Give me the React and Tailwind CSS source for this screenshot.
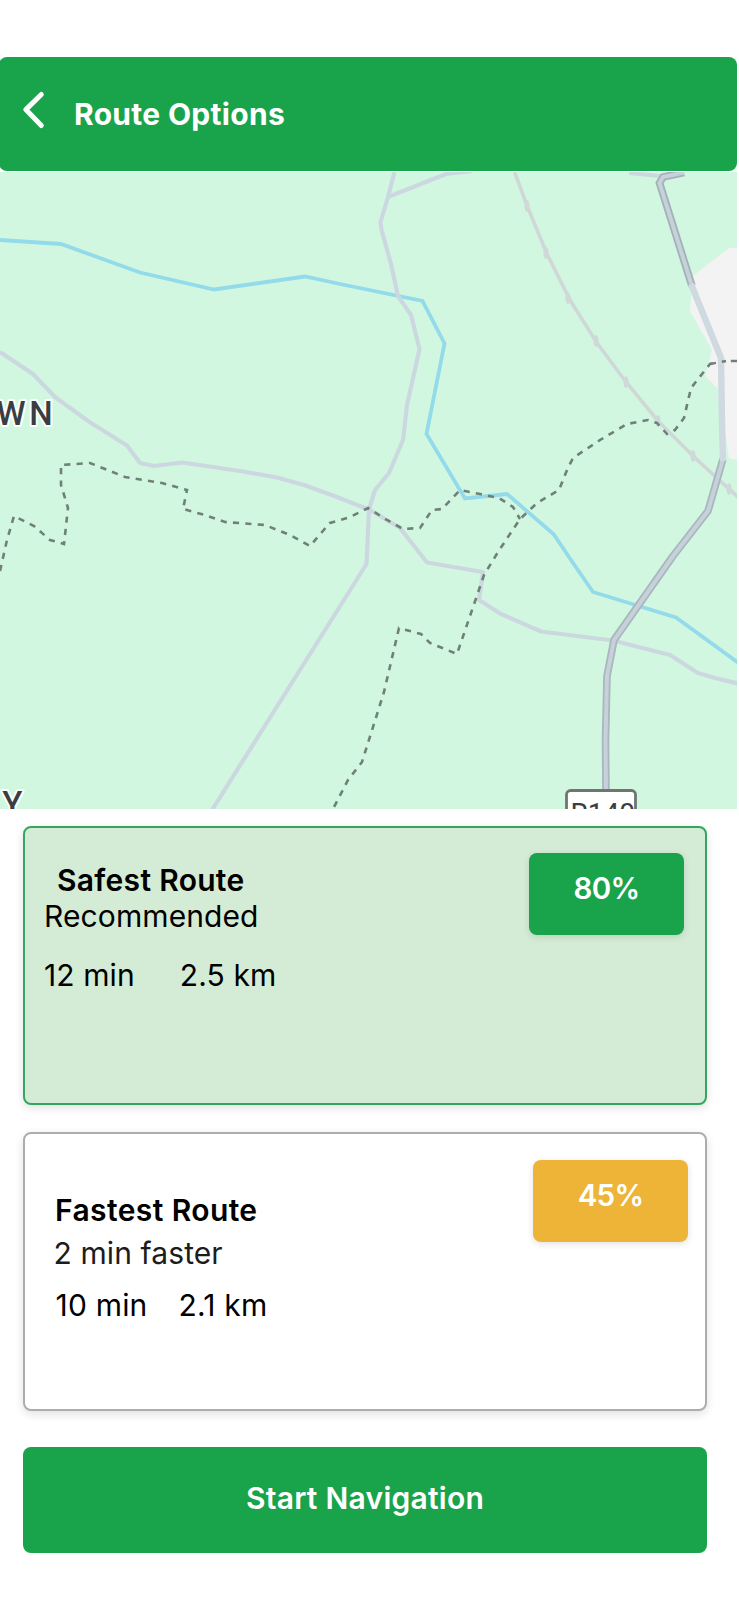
import React from "react";

const boundaries = [
  "M0 571 L7 540 L14 516 L34 526 L50 540 L64 544 L68 508 L61 485 L61 465 L90 463 L125 477 L162 483 L187 490 L183 509 L205 515 L225 522 L265 525 L290 535 L310 546 L322 532 L330 523 L350 517 L368 508 L387 520 L403 529 L420 528 L432 510 L442 509 L460 490 L480 494 L499 498 L513 507 L520 519",
  "M737 361 L726 361 L710 364 L691 388 L684 418 L675 430 L667 434 L657 423 L648 420 L627 424 L600 440 L573 458 L567 470 L559 490 L537 503 L520 519 L498 552 L484 575 L457 654 L430 643 L421 634 L399 628 L384 692 L362 762 L348 780 L333 809",
];

const roads = [
  "M394.5 172 L388 197 L380.5 222 L381.5 230 L391 264 L398 296 L411 315 L419.5 349 L407 405 L403 440 L389 473 L375 490 L369 509 L366.5 564 L212 810",
  "M388 197 L446 174 L472 171",
  "M0 352 L33 374 L55 397 L88 421 L127 445.5 L140 463 L154 466 L182 462.5 L240 471 L277 477.5 L304 485 L337 497 L370 510 L400 528 L427 562.5 L483 572 L479 600 L501 614 L541 631.5 L613 640.5 L670 655 L698 673 L715 678 L740 684",
  "M629 173 L660 176",
];

const railTicks = [
  [527, 206],
  [546, 253],
  [568, 298],
  [596, 341],
  [626, 382],
  [658, 421],
  [693, 456],
  [729, 489],
];

function RouteMap() {
  return (
    <svg className="block h-[637px] w-[737px]" viewBox="0 172 737 637" fill="none">
      <rect x="0" y="172" width="737" height="637" fill="#d2f7e1" />
      <path d="M737 248 L729 248 L693 276 L690 311 L712 350 L705 376 L718 389 L729 458 L737 460 Z" fill="#f3f3f4" />
      <path
        d="M0 240 L61 244 L140 272.5 L214 289.5 L305 276.5 L340 284 L422.5 301 L444.5 343.5 L426.5 434 L465 498.5 L507 494 L553.5 534 L571 560 L593 592 L676 617.5 L740 664"
        stroke="#93dbea"
        strokeWidth="3.8"
      />
      {roads.map((d) => (
        <path key={d} d={d} stroke="#ccd8df" strokeWidth="4.2" strokeLinejoin="round" />
      ))}
      <path
        d="M514.5 172 L528 208 L547 254 L570 300 L597 343 L626 382 L658 421 L694 457 L740 499"
        stroke="#cfd7d7"
        strokeWidth="3.6"
      />
      {railTicks.map(([x, y]) => (
        <ellipse key={x} cx={x} cy={y} rx="2.6" ry="6" fill="#cfdad8" />
      ))}
      {boundaries.map((d) => (
        <path key={d} d={d} stroke="#6f8077" strokeWidth="2.6" strokeDasharray="6.2 6.2" />
      ))}
      <path d="M684 172.5 L663 177 L659.5 183 L692 286" stroke="#a3b1b8" strokeWidth="7.6" />
      <path d="M723 459 L708 511 L673 556 L614 640 L607 676 L605.5 740 L606 792" stroke="#a9b7be" strokeWidth="7.6" strokeLinejoin="round" />
      <path
        d="M684 172.5 L663 177 L659.5 183 L692 286 L721 358 L722 420 L723 459 L708 511 L673 556 L614 640 L607 676 L605.5 740 L606 792"
        stroke="#c6d1d9"
        strokeWidth="4"
      />
      <path d="M691 284 L721 358 L722 420 L723 461" stroke="#cfd9e0" strokeWidth="6.4" />
      <path d="M710 364 L726 361" stroke="#6f8077" strokeWidth="2.4" strokeDasharray="6 6" />
      <g fontFamily="Roboto, sans-serif" fontWeight="500" fontSize="33" fill="#3b3d43" stroke="#fafffc" strokeWidth="4" paintOrder="stroke" strokeLinejoin="round">
        <text x="-3.5" y="424.5">W</text>
        <text x="29.3" y="424.5">N</text>
        <text x="2.3" y="815">Y</text>
      </g>
      <rect x="566.5" y="790.5" width="69" height="36" rx="4" fill="#fff" stroke="#707572" strokeWidth="2.8" />
      <text x="570.5" y="823" fontFamily="Roboto, sans-serif" fontSize="28" fill="#3b3d43">R140</text>
    </svg>
  );
}

function Badge({ className, children }) {
  return (
    <div className={`h-[82px] w-[155px] rounded-lg pt-[17px] text-center text-[29.5px] font-semibold tracking-[-0.7px] text-white shadow-[0_2px_7px_rgba(0,0,0,0.12)] ${className}`}>
      {children}
    </div>
  );
}

export default function App() {
  return (
    <main className="h-[1600px] w-[739px] overflow-hidden bg-white font-[Inter,sans-serif] text-[30px] leading-[36px] text-black">
      <header className="-ml-px mt-[57px] flex h-[113.5px] w-[738px] rounded-lg bg-[#19a44b] text-white">
        <svg className="ml-[20px] mt-[33px] h-10 w-8" viewBox="0 0 32 40" fill="none" stroke="currentColor" strokeWidth="5" strokeLinecap="round" strokeLinejoin="round">
          <path d="M22.3 4.5 L6.8 19.6 L22.3 35.5" />
        </svg>
        <h1 className="ml-[23px] mt-[39px] font-bold tracking-[0.3px]">Route Options</h1>
      </header>

      <div className="mt-[1.5px]">
        <RouteMap />
      </div>

      <div className="ml-[23px] mt-[17px] w-[684px]">
        <section className="flex h-[279px] justify-between rounded-lg border-2 border-[#35a662] bg-[#d4ecd5] shadow-[0_3px_10px_rgba(0,0,0,0.12)]">
          <div className="pl-[19px] pt-[34px]">
            <h2 className="pl-[13px] font-semibold tracking-[0.3px]">Safest Route</h2>
            <p className="tracking-[0.1px]">Recommended</p>
            <div className="mt-[23px] flex gap-[45px] tracking-[0.1px]">
              <span>12 min</span>
              <span>2.5 km</span>
            </div>
          </div>
          <Badge className="mr-[21px] mt-[25px] bg-[#19a44b]">80%</Badge>
        </section>

        <section className="mt-[27px] flex h-[279px] justify-between rounded-lg border-2 border-[#adadad] bg-white shadow-[0_3px_10px_rgba(0,0,0,0.12)]">
          <div className="pl-[30px] pt-[58px]">
            <h2 className="font-semibold tracking-[0.4px]">Fastest Route</h2>
            <p className="-ml-[1.5px] mt-[7px] tracking-[0.1px] text-[#1c1c1c]">2 min faster</p>
            <div className="ml-[0.5px] mt-[16px] flex gap-[31px] tracking-[0.2px]">
              <span>10 min</span>
              <span>2.1 km</span>
            </div>
          </div>
          <Badge className="mr-[17px] mt-[26px] bg-[#edb437]">45%</Badge>
        </section>

        <button className="mt-[35.5px] flex h-[106.5px] w-full justify-center rounded-lg bg-[#19a44b] pt-[33px] font-semibold tracking-[0.25px] text-white">
          Start Navigation
        </button>
      </div>
    </main>
  );
}
